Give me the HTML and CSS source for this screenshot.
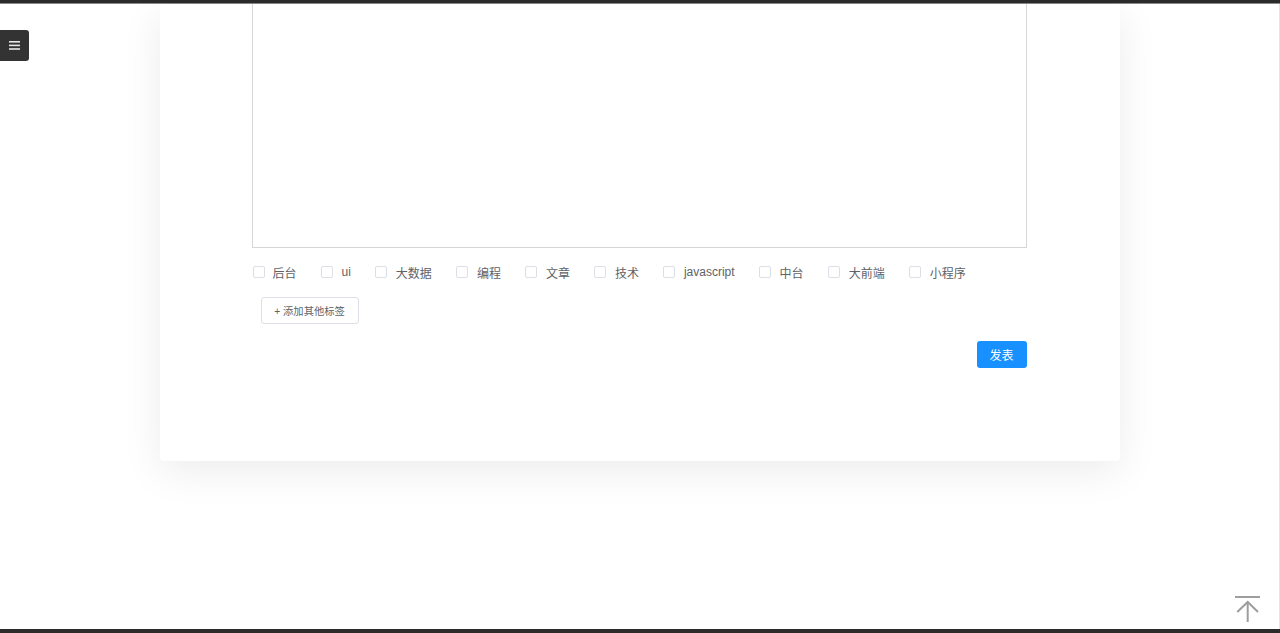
FILE: index.html
```html
<!DOCTYPE html>
<html lang="zh-CN">
<head>
    <meta charset="UTF-8">
    <meta name="viewport" content="width=device-width, initial-scale=1.0">
    <title>发表文章</title>
    <link rel="stylesheet" href="styles.css">
</head>
<body>
    <div class="topbar"></div>

    <div class="main">
        <div class="menu-toggle">
            <svg width="11" height="9" viewBox="0 0 11 9">
                <rect x="0" y="0" width="11" height="1.6" fill="#e6e6e6"/>
                <rect x="0" y="3.6" width="11" height="1.6" fill="#e6e6e6"/>
                <rect x="0" y="7.2" width="11" height="1.6" fill="#e6e6e6"/>
            </svg>
        </div>

        <div class="card">
            <textarea class="content"></textarea>

            <div class="tags">
                <label class="tag"><span class="box"></span>后台</label>
                <label class="tag"><span class="box"></span>ui</label>
                <label class="tag"><span class="box"></span>大数据</label>
                <label class="tag"><span class="box"></span>编程</label>
                <label class="tag"><span class="box"></span>文章</label>
                <label class="tag"><span class="box"></span>技术</label>
                <label class="tag"><span class="box"></span>javascript</label>
                <label class="tag"><span class="box"></span>中台</label>
                <label class="tag"><span class="box"></span>大前端</label>
                <label class="tag"><span class="box"></span>小程序</label>
            </div>

            <div class="new-tag-row">
                <button class="new-tag">+ 添加其他标签</button>
            </div>

            <div class="submit-row">
                <button class="submit">发表</button>
            </div>
        </div>

        <div class="back-top">
            <svg width="27" height="27" viewBox="0 0 27 27">
                <line x1="1" y1="1" x2="26" y2="1" stroke="#9e9e9e" stroke-width="2"/>
                <polyline points="3.3,16 13.7,6 24,16" fill="none" stroke="#9e9e9e" stroke-width="2"/>
                <line x1="13.7" y1="6" x2="13.7" y2="26" stroke="#9e9e9e" stroke-width="2"/>
            </svg>
        </div>
    </div>

    <div class="bottombar"></div>
</body>
</html>
```

FILE: styles.css
```css
* {
    box-sizing: border-box;
}
body {
    margin: 0;
    height: 633px;
    overflow: hidden;
    font-family: "Liberation Sans", "Noto Sans CJK SC", sans-serif;
    background-color: #fff;
    display: flex;
    flex-direction: column;
}
.topbar {
    height: 4px;
    background-color: #2b2b2b;
    border-bottom: 1px solid #8a8a8a;
}
.bottombar {
    height: 4px;
    background-color: #2b2b2b;
}
.main {
    flex: 1;
    position: relative;
    border-right: 1px solid #e4e4e4;
}
.menu-toggle {
    position: absolute;
    left: 0;
    top: 26px;
    width: 29px;
    height: 31px;
    background-color: #333;
    border-radius: 0 3px 3px 0;
    display: flex;
    align-items: center;
    justify-content: center;
    padding-right: 1px;
}
.menu-toggle svg {
    display: block;
}
.card {
    width: 960px;
    margin: 0 auto;
    padding: 0 93px 93px 92px;
    background-color: #fff;
    border-radius: 0 0 4px 4px;
    box-shadow: 0 10px 40px rgba(0, 0, 0, 0.08);
}
.content {
    display: block;
    width: 100%;
    height: 244px;
    border: 1px solid #d6d6d6;
    border-top: none;
    resize: none;
    outline: none;
    background-color: #fff;
}
.tags {
    display: flex;
    align-items: center;
    margin-top: 14px;
    padding-left: 1px;
    height: 20px;
}
.tag {
    display: flex;
    align-items: center;
    gap: 8px;
    margin-right: 24px;
    font-size: 12px;
    color: #606266;
    cursor: pointer;
}
.tag:first-child {
    gap: 7px;
}
.box {
    width: 12px;
    height: 12px;
    border: 1px solid #dcdfe6;
    border-radius: 2px;
    background-color: #fff;
    margin-right: 1px;
}
.new-tag-row {
    margin-top: 15px;
    padding-left: 9px;
}
.new-tag {
    width: 98px;
    height: 27px;
    padding: 0;
    font-family: inherit;
    font-size: 10.3px;
    color: #606266;
    background-color: #fff;
    border: 1px solid #dcdfe6;
    border-radius: 3px;
    cursor: pointer;
}
.submit-row {
    display: flex;
    justify-content: flex-end;
    margin-top: 17px;
}
.submit {
    width: 50px;
    height: 27px;
    padding: 0;
    font-family: inherit;
    font-size: 12px;
    color: #fff;
    background-color: #1890ff;
    border: none;
    border-radius: 3px;
    cursor: pointer;
}
.back-top {
    position: absolute;
    right: 18px;
    bottom: 6px;
    cursor: pointer;
}
.back-top svg {
    display: block;
}
```
